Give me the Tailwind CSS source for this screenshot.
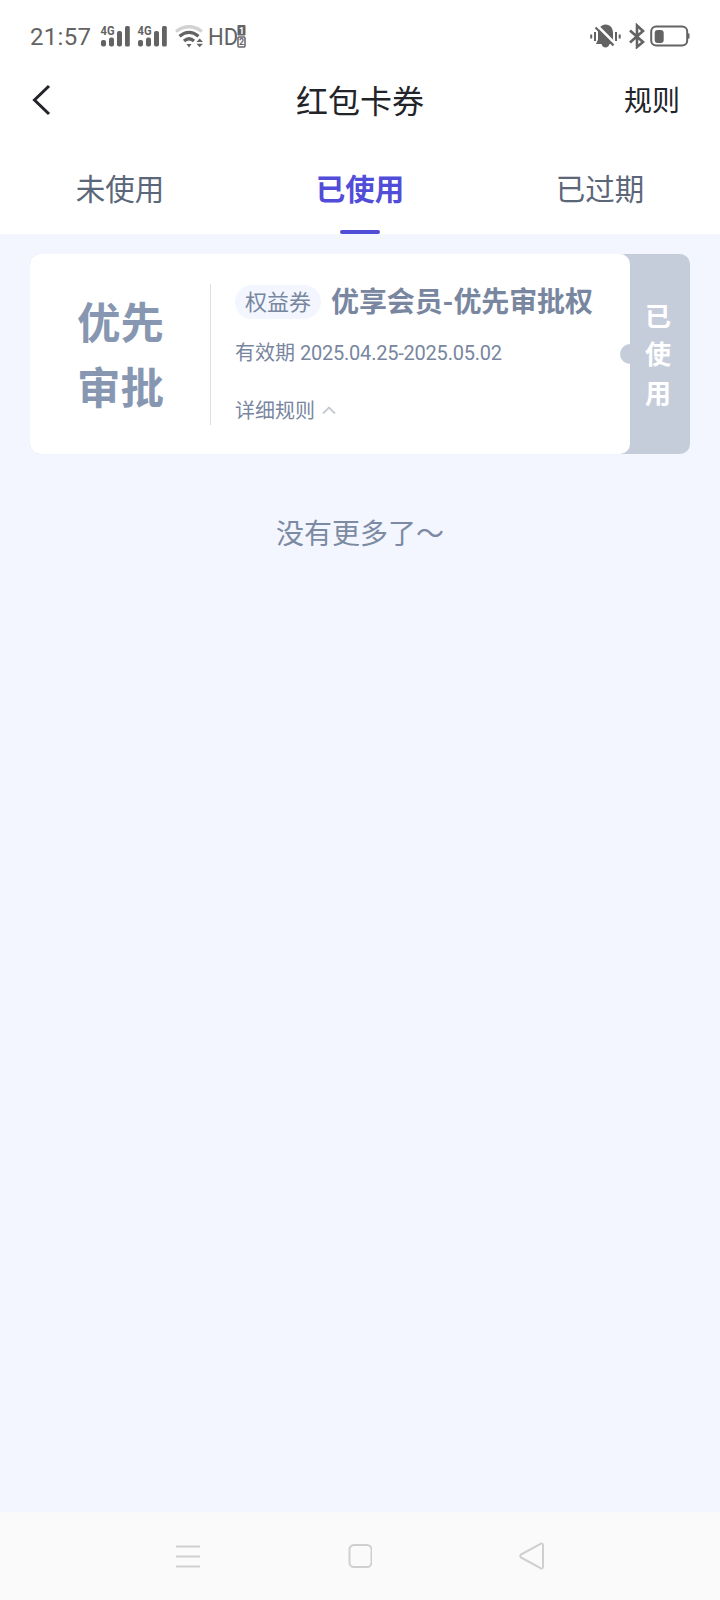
<!DOCTYPE html>
<html lang="zh-CN">
<head>
  <meta charset="UTF-8" />
  <meta name="viewport" content="width=device-width, initial-scale=1.0" />
  <title>红包卡券</title>
  <script src="https://cdn.jsdelivr.net/npm/@tailwindcss/browser@4"></script>
</head>
<body class="flex h-[1600px] w-[720px] flex-col overflow-hidden bg-[#f3f6fe] font-[Roboto,'Noto_Sans_CJK_SC',sans-serif]">

  <!-- Status bar -->
  <div class="flex h-[72px] items-center justify-between bg-white pl-[30px] pr-[30px] text-[#636363]">
    <div class="flex items-center">
      <span class="w-[70px] pt-px text-2xl leading-none tracking-[0.3px]">21:57</span>
      <!-- Signal, both SIM cards -->
      <svg class="mr-[7px] h-6 w-[30px]" viewBox="0 0 30 24" fill="currentColor">
        <text x="0.500" y="10.500" font-size="12" font-weight="700" textLength="14" lengthAdjust="spacingAndGlyphs">4G</text>
        <rect x="1" y="16" width="5" height="6.500" rx="2" />
        <rect x="9" y="13.500" width="5" height="9" rx="2" />
        <rect x="17" y="7" width="5" height="15.500" rx="2" />
        <rect x="25" y="2" width="4.800" height="20.500" rx="1.500" />
      </svg>
      <svg class="mr-[8px] h-6 w-[30px]" viewBox="0 0 30 24" fill="currentColor">
        <text x="0.500" y="10.500" font-size="12" font-weight="700" textLength="14" lengthAdjust="spacingAndGlyphs">4G</text>
        <rect x="1" y="16" width="5" height="6.500" rx="2" />
        <rect x="9" y="13.500" width="5" height="9" rx="2" />
        <rect x="17" y="7" width="5" height="15.500" rx="2" />
        <rect x="25" y="2" width="4.800" height="20.500" rx="1.500" />
      </svg>
      <!-- Wi-Fi -->
      <svg class="mr-[4px] h-6 w-[29px]" viewBox="0 0 29 24" fill="none" stroke="currentColor" stroke-width="3.200">
        <path d="M1 7.500Q14 -2 27 7.500" stroke="#d2d2d2" />
        <path d="M4.500 12.300Q14 4.500 23.500 12.300" />
        <path d="M9 17Q14 12.500 19 17" />
        <path d="M11.500 20h5L14 23.500z" fill="currentColor" stroke="none" />
        <path d="M21.500 18h6.500L24.700 14.500zM21.500 19.700h6.500L24.700 23.200z" fill="currentColor" stroke="none" />
      </svg>
      <span class="w-[29px] origin-left scale-x-[0.92] pt-px text-2xl leading-none">HD</span>
      <svg class="h-6 w-[9px]" viewBox="0 0 9 24" fill="currentColor">
        <rect x="0.500" y="1" width="8" height="10.500" rx="1" />
        <text x="2" y="9.500" font-size="9" font-weight="700" fill="#fff">1</text>
        <rect x="1" y="13" width="7" height="10" rx="1" fill="#fff" stroke="currentColor" stroke-width="1.500" />
        <text x="1.900" y="21.300" font-size="9" font-weight="700">2</text>
      </svg>
    </div>
    <div class="flex items-center">
      <!-- Muted bell -->
      <svg class="mr-[8px] h-6 w-[31px]" viewBox="0 0 31 24" fill="none" stroke="currentColor" stroke-width="2">
        <path d="M1.200 10.500v4M5 8v9M26 8v9M29.700 10.500v4" />
        <path d="M15.500 0.500C20.500 1 23 4 23 9v6l2 5h-5.500c-.5 2-2 3.500-4 3.500s-3.500-1.500-4-3.500H6l2-4.500V9C8 4.500 10.500 1 15.500 0.500z" fill="currentColor" stroke="none" />
        <path d="M7 1.500L26 20.500" stroke="#fff" stroke-width="2.600" />
        <path d="M5.500 3.500L23.500 21.500" stroke-width="2.200" />
      </svg>
      <!-- Bluetooth -->
      <svg class="mr-[5px] h-[26px] w-4" viewBox="0 0 16 26" fill="none" stroke="currentColor" stroke-width="2.600">
        <path d="M1 7.500L14 19L8 24V2.500L14 8L1 19.500" />
      </svg>
      <!-- Battery -->
      <svg class="h-6 w-[40px]" viewBox="0 0 40 24" fill="none" stroke="currentColor" stroke-width="2">
        <rect x="1.200" y="2.500" width="36" height="19" rx="5" />
        <rect x="4.700" y="6" width="9" height="13" rx="3" fill="currentColor" stroke="none" />
        <path d="M38.500 9.500v5" />
      </svg>
    </div>
  </div>

  <!-- Title bar -->
  <header class="grid h-14 grid-cols-3 items-center bg-white pl-[30px] pr-10 text-[#22242a]">
    <svg class="h-8 w-6" viewBox="0 0 24 32" fill="none" stroke="currentColor" stroke-width="3">
      <path d="M19 2L4.500 16L19 30" />
    </svg>
    <h1 class="translate-x-[5px] pt-[3px] text-center text-[32px] leading-none">红包卡券</h1>
    <a class="pt-1 text-right text-[28px] leading-none">规则</a>
  </header>

  <!-- Tabs -->
  <nav class="grid h-[106px] grid-cols-3 bg-white pt-[40px] text-center text-[29.500px] leading-[44px] text-[#5b6679]">
    <a>未使用</a>
    <a class="flex flex-col items-center justify-between font-bold text-[#514dd8]">
      已使用
      <span class="h-1 w-10 rounded-full bg-[#514dd8]"></span>
    </a>
    <a>已过期</a>
  </nav>

  <!-- Coupon list -->
  <main class="flex-1 px-[30px] pt-5">
    <article class="flex h-[200px] rounded-[10px] bg-[#c6cdda]">
      <div class="relative flex w-[600px] items-center rounded-[10px] bg-white">
        <div class="w-[180px] pl-px pt-[5px] text-center text-[43.500px] font-bold leading-[65px] text-[#8797b1]">优先<br />审批</div>
        <div class="h-[141px] w-px bg-[#dcdfe6]"></div>
        <div class="flex h-full flex-col pl-6 pt-[28px] text-[#7886a0]">
          <div class="flex items-center">
            <span class="flex h-[34px] w-[86px] items-center justify-center rounded-full bg-[#f3f6fe] pt-px text-[22px] leading-none">权益券</span>
            <h2 class="ml-[10px] whitespace-nowrap pt-px text-[28px] font-bold leading-[39px] tracking-[-0.12px]">优享会员-优先审批权</h2>
          </div>
          <p class="mt-[16px] text-[20px] leading-[30px]">有效期 <span class="tracking-[-0.22px]">2025.04.25-2025.05.02</span></p>
          <div class="mt-[28px] flex items-center text-[20px] leading-[30px]">
            详细规则
            <svg class="ml-[7px] h-[10px] w-[14px]" viewBox="0 0 14 10" fill="none" stroke="#c6c9cf" stroke-width="1.800">
              <path d="M1 7.500L7 1.500L13 7.500" />
            </svg>
          </div>
        </div>
        <!-- Ticket notch -->
        <span class="absolute right-0 top-[90px] h-5 w-[10px] rounded-l-full bg-[#c6cdda]"></span>
      </div>
      <div class="flex flex-1 flex-col items-center justify-center pr-1 pt-[3px] text-[26px] font-bold leading-[38.500px] text-white">
        <span>已</span>
        <span>使</span>
        <span>用</span>
      </div>
    </article>

    <p class="mt-[61px] text-center text-[28px] leading-[40px] text-[#7c8aa3]">没有更多了～</p>
  </main>

  <!-- System navigation -->
  <footer class="flex h-[88px] items-center justify-between bg-[#fafafa] pl-44 pr-[175px] text-[#cfcfcf]">
    <svg class="h-7 w-6" viewBox="0 0 24 28" fill="none" stroke="currentColor" stroke-width="2">
      <path d="M0 4.500h24M0 14.500h24M0 24.500h24" />
    </svg>
    <svg class="h-7 w-6" viewBox="0 0 24 28" fill="none" stroke="currentColor" stroke-width="2">
      <rect x="1.500" y="3" width="22" height="22" rx="4.500" />
    </svg>
    <svg class="h-7 w-[26px]" viewBox="0 0 26 28" fill="none" stroke="currentColor" stroke-width="2" stroke-linejoin="round">
      <path d="M2 12.500L21.500 1.800Q24 1 24 3.500V24.500Q24 27 21.500 26.200L2 15.500Q0.500 14 2 12.500z" />
    </svg>
  </footer>

</body>
</html>
